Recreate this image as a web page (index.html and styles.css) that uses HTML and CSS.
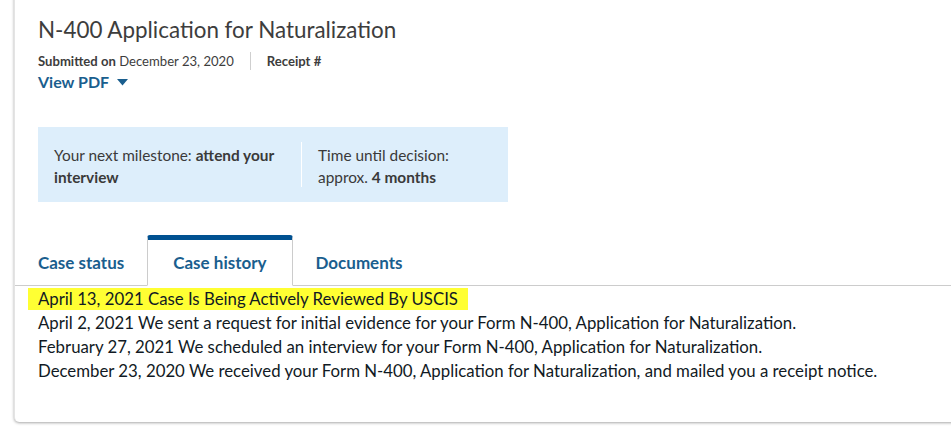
FILE: index.html
```html
<!DOCTYPE html>
<html lang="en">
<head>
<meta charset="utf-8">
<title>N-400 Application for Naturalization</title>
<link rel="stylesheet" href="styles.css">
</head>
<body>
<div class="card">
  <div class="head">
    <h1 class="title">N-400 Application for Naturalization</h1>
    <div class="meta">
      <span class="meta-item"><b>Submitted on</b> December 23, 2020</span>
      <span class="meta-sep"></span>
      <span class="meta-item"><b>Receipt #</b></span>
    </div>
    <a class="pdf" href="#">View PDF <svg class="caret" width="11" height="7" viewBox="0 0 11 7"><path d="M0 0 L11 0 L5.5 6.5 Z" fill="currentColor"/></svg></a>
    <div class="milestone">
      <div class="ms-col ms-left">Your next milestone: <b>attend your interview</b></div>
      <div class="ms-col ms-right">Time until decision:<br>approx. <b>4 months</b></div>
    </div>
  </div>
  <div class="tabs">
    <a class="tab" href="#">Case status</a>
    <a class="tab active" href="#">Case history</a>
    <a class="tab" href="#">Documents</a>
  </div>
  <ul class="history">
    <li class="item"><span class="hl">April 13, 2021 Case Is Being Actively Reviewed By USCIS</span></li>
    <li class="item">April 2, 2021 We sent a request for initial evidence for your Form N-400, Application for Naturalization.</li>
    <li class="item">February 27, 2021 We scheduled an interview for your Form N-400, Application for Naturalization.</li>
    <li class="item">December 23, 2020 We received your Form N-400, Application for Naturalization, and mailed you a receipt notice.</li>
  </ul>
</div>
</body>
</html>
```
FILE: styles.css
```css
html, body {
  margin: 0;
  padding: 0;
  background: #ffffff;
  overflow: hidden;
}
body {
  font-family: Lato, "Open Sans", sans-serif;
  color: #1b1b1b;
  width: 951px;
  height: 436px;
}
.card {
  margin-left: 14px;
  margin-right: -30px;
  margin-top: -10px;
  height: 432px;
  box-sizing: border-box;
  background: #fff;
  border-left: 1px solid #e4e4e4;
  border-bottom-left-radius: 5px;
  box-shadow: 0 1px 3px rgba(0,0,0,0.35);
}
.head {
  padding: 24px 0 0 23px;
}
.title {
  margin: 0;
  font-size: 22.4px;
  font-weight: 400;
  color: #3d3d3d;
  line-height: 32px;
}
.meta {
  display: flex;
  align-items: center;
  margin-top: 6px;
  font-size: 13.1px;
  color: #3d3d3d;
  height: 18px;
}
.meta b { font-weight: 700; }
.meta-sep {
  width: 1px;
  height: 18px;
  background: #cfcfcf;
  margin: 0 16px;
}
.pdf {
  display: inline-flex;
  align-items: center;
  gap: 8px;
  margin-top: 1px;
  font-size: 16px;
  font-weight: 700;
  color: #1a5e8e;
  text-decoration: none;
  line-height: 22px;
}
.caret { margin-top: 1px; }
.milestone {
  display: flex;
  width: 470px;
  height: 75px;
  box-sizing: border-box;
  margin-top: 34px;
  background: #ddeefb;
  padding: 15px 0;
  font-size: 15.4px;
  line-height: 22px;
  color: #3a3a3a;
}
.ms-col { box-sizing: border-box; }
.ms-left {
  width: 264px;
  padding: 2px 12px 0 16px;
  border-right: 1px solid #ffffff;
}
.ms-right {
  padding: 2px 16px 0 16px;
}
.tabs {
  display: flex;
  margin-top: 33px;
  border-bottom: 1px solid #cccccc;
  height: 50px;
}
.tab {
  display: flex;
  align-items: center;
  padding: 5px 22px 0 22px;
  font-size: 17px;
  font-weight: 700;
  color: #1a5e8e;
  text-decoration: none;
  box-sizing: border-box;
  height: 51px;
  border: 1px solid transparent;
  border-top: 0;
}
.tab.active {
  padding: 0 25px;
  border-color: #cccccc;
  border-top: 5px solid #005191;
  border-bottom: 1px solid #ffffff;
  border-radius: 3px 3px 0 0;
  background: #fff;
}
.history {
  list-style: none;
  margin: 0;
  padding: 1px 0 0 13px;
  font-size: 16.8px;
  line-height: 24px;
  color: #111a24;
}
.item {
  padding: 0 10px;
}
.item:first-child {
  padding: 0;
}
.hl {
  display: inline-block;
  background: #ffff33;
  padding: 0 10px;
  line-height: 22px;
  margin: 1px 0;
}
```
